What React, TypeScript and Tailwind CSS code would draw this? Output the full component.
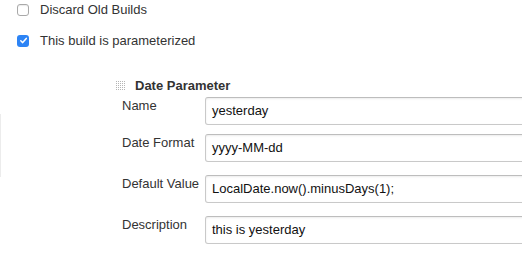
import React from "react";

function Checkbox({ checked }: { checked?: boolean }) {
  if (checked) {
    return (
      <div className="w-[12px] h-[12px] rounded-[3px] bg-[#2d84f5] flex items-center justify-center">
        <svg width="9" height="9" viewBox="0 0 9 9">
          <path d="M1.8 4.8 L3.7 6.6 L7.3 2.4" fill="none" stroke="#fff" strokeWidth="1.5" strokeLinecap="round" strokeLinejoin="round" />
        </svg>
      </div>
    );
  }
  return <div className="w-[12px] h-[12px] rounded-[3px] border border-[#a9a9a9] bg-white shadow-[inset_0_1px_1px_rgba(0,0,0,0.08)]" />;
}

function DragHandle() {
  const dots = [];
  for (let r = 0; r < 5; r++) {
    for (let c = 0; c < 5; c++) {
      dots.push(<rect key={`${r}-${c}`} x={c * 2} y={r * 2} width="1" height="1" fill="#b5b5b5" />);
    }
  }
  return (
    <svg width="10" height="10" viewBox="0 0 10 10">
      {dots}
    </svg>
  );
}

const rows = [
  { label: "Name", value: "yesterday", gap: "mt-[3px]" },
  { label: "Date Format", value: "yyyy-MM-dd", gap: "mt-[9px]" },
  { label: "Default Value", value: "LocalDate.now().minusDays(1);", gap: "mt-[13px]" },
  { label: "Description", value: "this is yesterday", gap: "mt-[13px]" },
];

export default function App() {
  return (
    <div className="relative w-[522px] h-[277px] overflow-hidden bg-white text-[13px] text-[#333] font-['Liberation_Sans',Arial,sans-serif]">
      {/* faint edge of the outer section */}
      <div className="absolute left-0 top-[114px] w-px h-[63px] bg-[#ececec]" />

      <div className="flex items-center h-[19px] pl-[17px] gap-[11px]">
        <Checkbox />
        <span className="leading-[16px]">Discard Old Builds</span>
      </div>
      <div className="flex items-center h-[19px] mt-[12px] pl-[17px] gap-[11px]">
        <Checkbox checked />
        <span className="leading-[16px]">This build is parameterized</span>
      </div>

      <div className="mt-[28px] pl-[116px] flex items-center h-[16px] gap-[9px]">
        <DragHandle />
        <span className="font-bold leading-[16px]">Date Parameter</span>
      </div>

      <div className="pl-[122px]">
        {rows.map((r) => (
          <div key={r.label} className={`flex ${r.gap}`}>
            <div className="w-[83px] shrink-0 whitespace-nowrap leading-[15px] pt-[1px]">{r.label}</div>
            <div className="w-[340px] h-[28px] shrink-0 rounded-[3px] border border-[#c9c9c9] border-t-[#bdbdbd] shadow-[inset_0_1px_2px_rgba(0,0,0,0.08)] flex items-center pl-[6px] text-[13px] text-[#111]">
              {r.value}
            </div>
          </div>
        ))}
      </div>
    </div>
  );
}
